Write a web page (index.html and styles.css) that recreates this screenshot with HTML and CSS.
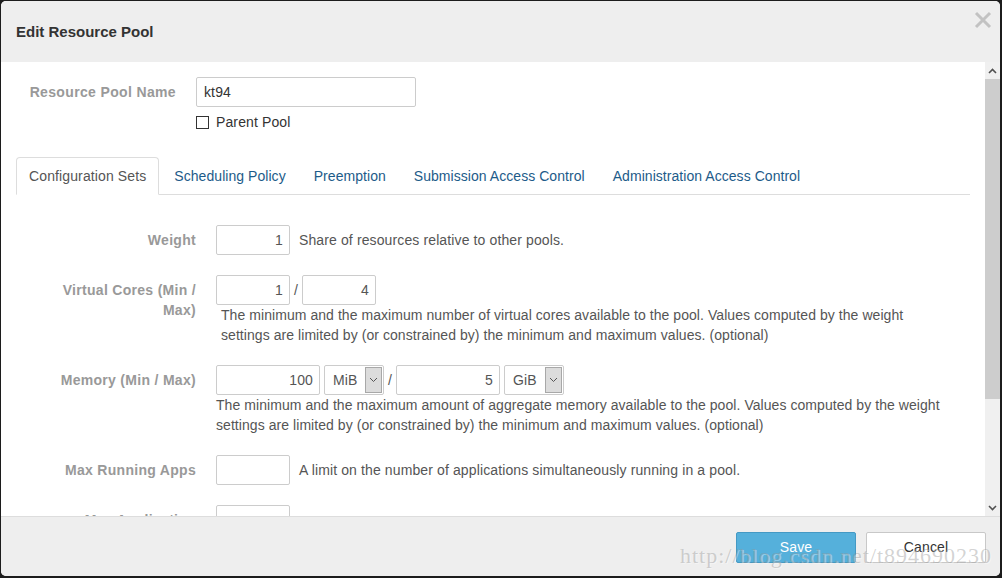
FILE: index.html
```html
<!DOCTYPE html>
<html>
<head>
<meta charset="utf-8">
<link rel="stylesheet" href="styles.css">
</head>
<body>
<div class="modal">
  <div class="modal-header">
    <h3 class="title">Edit Resource Pool</h3>
    <span class="close" aria-label="close">
      <svg width="18" height="18" viewBox="0 0 18 18"><path d="M2 2 L16 16 M16 2 L2 16" stroke="#c2c2c2" stroke-width="3" fill="none"/></svg>
    </span>
  </div>
  <div class="modal-body">
    <div class="content">
      <div class="row top-row">
        <label class="label">Resource Pool Name</label>
        <div class="controls">
          <div class="input name-input">kt94</div>
          <div class="check-line"><span class="checkbox"></span><span>Parent Pool</span></div>
        </div>
      </div>

      <ul class="tabs">
        <li class="tab active">Configuration Sets</li>
        <li class="tab">Scheduling Policy</li>
        <li class="tab">Preemption</li>
        <li class="tab">Submission Access Control</li>
        <li class="tab">Administration Access Control</li>
      </ul>

      <div class="form">
        <div class="row">
          <label class="label">Weight</label>
          <div class="controls">
            <div class="inline">
              <div class="input num w74">1</div>
              <span class="inline-help">Share of resources relative to other pools.</span>
            </div>
          </div>
        </div>

        <div class="row">
          <label class="label">Virtual Cores (Min / Max)</label>
          <div class="controls">
            <div class="inline">
              <div class="input num w74">1</div>
              <span class="slash">/</span>
              <div class="input num w74">4</div>
            </div>
            <p class="help indent">The minimum and the maximum number of virtual cores available to the pool. Values computed by the weight<br>settings are limited by (or constrained by) the minimum and maximum values. (optional)</p>
          </div>
        </div>

        <div class="row">
          <label class="label">Memory (Min / Max)</label>
          <div class="controls">
            <div class="inline">
              <div class="input num w104">100</div>
              <div class="select"><span class="sel-text">MiB</span><span class="sel-btn"><svg width="9" height="6" viewBox="0 0 9 6"><path d="M1 1 L4.5 4.5 L8 1" stroke="#555" stroke-width="1" fill="none"/></svg></span></div>
              <span class="slash">/</span>
              <div class="input num w104">5</div>
              <div class="select"><span class="sel-text">GiB</span><span class="sel-btn"><svg width="9" height="6" viewBox="0 0 9 6"><path d="M1 1 L4.5 4.5 L8 1" stroke="#555" stroke-width="1" fill="none"/></svg></span></div>
            </div>
            <p class="help">The minimum and the maximum amount of aggregate memory available to the pool. Values computed by the weight<br>settings are limited by (or constrained by) the minimum and maximum values. (optional)</p>
          </div>
        </div>

        <div class="row">
          <label class="label">Max Running Apps</label>
          <div class="controls">
            <div class="inline">
              <div class="input num w74"></div>
              <span class="inline-help">A limit on the number of applications simultaneously running in a pool.</span>
            </div>
          </div>
        </div>

        <div class="row">
          <label class="label">Max Application<br>Master Share</label>
          <div class="controls">
            <div class="inline">
              <div class="input num w74"></div>
            </div>
          </div>
        </div>
      </div>
    </div>
    <div class="scrollbar">
      <div class="sb-btn"><svg width="9" height="6" viewBox="0 0 9 6"><path d="M1 5 L4.5 1.5 L8 5" stroke="#505050" stroke-width="1.6" fill="none"/></svg></div>
      <div class="sb-track"><div class="sb-thumb"></div></div>
      <div class="sb-btn"><svg width="9" height="6" viewBox="0 0 9 6"><path d="M1 1 L4.5 4.5 L8 1" stroke="#505050" stroke-width="1.6" fill="none"/></svg></div>
    </div>
  </div>
  <div class="modal-footer">
    <button class="btn btn-primary">Save</button>
    <button class="btn">Cancel</button>
    <span class="watermark">http://blog.csdn.net/t894690230</span>
  </div>
</div>
</body>
</html>
```

FILE: styles.css
```css
html, body {
  margin: 0;
  padding: 0;
}
body {
  width: 1002px;
  height: 578px;
  background: #1c1c1c;
  font-family: "Liberation Sans", Arial, sans-serif;
  font-size: 14px;
  letter-spacing: 0.12px;
  color: #555;
  overflow: hidden;
}
.modal {
  margin: 1px 0 0 1px;
  width: 999px;
  height: 575px;
  background: #fff;
  border-radius: 5px;
  overflow: hidden;
  display: flex;
  flex-direction: column;
}
.modal-header {
  height: 61px;
  flex: none;
  background: #eee;
  display: flex;
  align-items: center;
  justify-content: space-between;
  padding: 0 8px 0 15px;
  box-sizing: border-box;
}
.title {
  margin: 0;
  font-size: 15px;
  font-weight: bold;
  letter-spacing: 0;
  color: #333;
  line-height: 20px;
}
.close {
  align-self: flex-start;
  margin-top: 10px;
  width: 18px;
  height: 18px;
  display: block;
}
.close svg { display: block; }
.modal-body {
  height: 454px;
  flex: none;
  display: flex;
}
.content {
  flex: 1;
  min-width: 0;
  padding: 15px 15px 0 15px;
  overflow: hidden;
}
.row {
  display: flex;
  gap: 20px;
  margin-bottom: 20px;
}
.label {
  width: 160px;
  flex: none;
  text-align: right;
  font-weight: bold;
  letter-spacing: 0.3px;
  color: #999;
  line-height: 20px;
  padding-top: 5px;
}
.controls {
  flex: 1;
  min-width: 0;
}
.top-row {
  margin-bottom: 0;
}
.top-row .label {
  letter-spacing: 0.35px;
}
.input {
  box-sizing: border-box;
  height: 30px;
  border: 1px solid #ccc;
  border-radius: 2px;
  padding: 0 6px;
  line-height: 28px;
  color: #555;
  background: #fff;
  flex: none;
}
.name-input {
  width: 220px;
  padding-left: 7px;
  color: #333;
}
.num { text-align: right; }
.w74 { width: 74px; }
.w104 { width: 104px; }
.check-line {
  margin-top: 5px;
  display: flex;
  align-items: center;
  gap: 7px;
  line-height: 20px;
  color: #333;
}
.checkbox {
  width: 13px;
  height: 13px;
  box-sizing: border-box;
  border: 1px solid #333;
  background: #fff;
  display: block;
}
.tabs {
  list-style: none;
  margin: 25px 0 30px 0;
  padding: 0;
  display: flex;
  border-bottom: 1px solid #ddd;
}
.tab {
  padding: 8px 12px;
  line-height: 20px;
  letter-spacing: 0.05px;
  border: 1px solid transparent;
  border-radius: 4px 4px 0 0;
  margin: 0 2px -1px 0;
  color: #1d5b89;
}
.tab.active {
  color: #555;
  letter-spacing: 0.12px;
  border-color: #ddd;
  border-bottom-color: #fff;
  background: #fff;
}
.form {
  padding-left: 20px;
}
.inline {
  display: flex;
  align-items: center;
  height: 30px;
}
.inline-help {
  margin-left: 9px;
  color: #555;
  white-space: nowrap;
}
.slash {
  width: 12px;
  text-align: center;
  flex: none;
  color: #555;
}
.select {
  box-sizing: border-box;
  width: 60px;
  height: 30px;
  border: 1px solid #ccc;
  border-radius: 2px;
  margin-left: 4px;
  display: flex;
  align-items: stretch;
  padding: 1px;
  background: #fff;
  flex: none;
}
.sel-text {
  flex: 1;
  padding-left: 7px;
  line-height: 26px;
  color: #555;
}
.sel-btn {
  width: 17px;
  box-sizing: border-box;
  background: #dcdcdc;
  border: 1px solid #a8a8a8;
  display: flex;
  align-items: center;
  justify-content: center;
}
.sel-btn svg { display: block; }
.help {
  margin: 0;
  line-height: 20px;
  letter-spacing: 0.06px;
  color: #555;
  white-space: nowrap;
}
.help.indent {
  padding-left: 5px;
}
.scrollbar {
  width: 15px;
  flex: none;
  background: #f0f0f0;
  display: flex;
  flex-direction: column;
}
.sb-btn {
  height: 17px;
  flex: none;
  display: flex;
  align-items: center;
  justify-content: center;
}
.sb-btn svg { display: block; }
.sb-track {
  flex: 1;
}
.sb-thumb {
  height: 320px;
  background: #cdcdcd;
}
.modal-footer {
  flex: 1;
  position: relative;
  background: #eee;
  border-top: 1px solid #ddd;
  display: flex;
  justify-content: flex-end;
  align-items: flex-start;
  gap: 10px;
  padding: 15px 14px 0 0;
}
.btn {
  width: 120px;
  height: 31px;
  box-sizing: border-box;
  border: 1px solid #c8c8c8;
  border-radius: 2px;
  background: #fff;
  color: #333;
  font-family: "Liberation Sans", Arial, sans-serif;
  font-size: 14px;
  letter-spacing: 0.12px;
  padding: 0;
  line-height: 29px;
}
.btn-primary {
  background: #55b0db;
  border-color: #4499c4;
  color: #fff;
}
.watermark {
  position: absolute;
  left: 679px;
  top: 26px;
  font-family: "Liberation Serif", "Times New Roman", serif;
  font-size: 22px;
  letter-spacing: 1px;
  line-height: 26px;
  color: rgba(150, 150, 150, 0.42);
  text-shadow: 1px 1px 0 rgba(255, 255, 255, 0.4);
  white-space: nowrap;
  pointer-events: none;
}
```
